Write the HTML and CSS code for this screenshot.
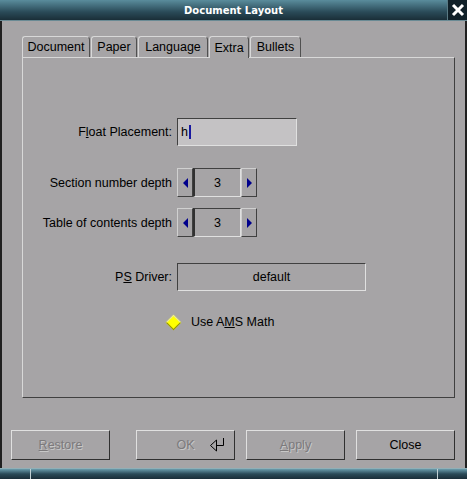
FILE: index.html
```html
<!DOCTYPE html>
<html lang="en">
<head>
    <meta charset="UTF-8">
    <title>Document Layout</title>
    <link rel="stylesheet" href="styles.css">
</head>
<body>
    <div class="window">
        <div class="titlebar">
            <span class="title">Document Layout</span>
            <span class="close-btn">
                <svg width="14" height="14" viewBox="0 0 14 14"><path d="M2 2 L12 12 M12 2 L2 12" stroke="#fff" stroke-width="3"/></svg>
            </span>
        </div>
        <div class="frame">
            <div class="tabs">
                <div class="tab w-doc">Document</div>
                <div class="tab w-paper">Paper</div>
                <div class="tab w-lang">Language</div>
                <div class="tab active w-extra">Extra</div>
                <div class="tab w-bullets">Bullets</div>
            </div>
            <div class="panel">
                <div class="row row-float">
                    <label class="lbl">F<u>l</u>oat Placement:</label>
                    <div class="input">h<span class="caret"></span></div>
                </div>
                <div class="row row-sec">
                    <label class="lbl">Section number depth</label>
                    <div class="spin">
                        <span class="arrow left"></span>
                        <span class="val">3</span>
                        <span class="arrow right"></span>
                    </div>
                </div>
                <div class="row row-toc">
                    <label class="lbl">Table of contents depth</label>
                    <div class="spin">
                        <span class="arrow left"></span>
                        <span class="val">3</span>
                        <span class="arrow right"></span>
                    </div>
                </div>
                <div class="row row-ps">
                    <label class="lbl">P<u>S</u> Driver:</label>
                    <div class="combo">default</div>
                </div>
                <div class="check">
                    <span class="diamond"></span>
                    <span>Use A<u>M</u>S Math</span>
                </div>
            </div>
            <div class="buttons">
                <div class="btn disabled"><u>R</u>estore</div>
                <div class="btn disabled ok">OK
                    <svg class="enter" width="18" height="16" viewBox="0 0 18 16"><path d="M15.5 1 V8.5 H8" fill="none" stroke="#000" stroke-width="1"/><path d="M8.5 3 L2.5 8.5 L8.5 14 Z" fill="none" stroke="#000" stroke-width="1"/></svg>
                </div>
                <div class="btn disabled"><u>A</u>pply</div>
                <div class="btn">Close</div>
            </div>
        </div>
        <div class="bottombar">
            <span class="grip g1"></span>
            <span class="grip g2"></span>
        </div>
    </div>
</body>
</html>
```

FILE: styles.css
```css
body {
    margin: 0;
    font-family: "Liberation Sans", Arial, sans-serif;
    font-size: 12.5px;
    color: #000;
    background: #a6a4a6;
}
.window {
    width: 467px;
    height: 479px;
    display: flex;
    flex-direction: column;
    background: #a6a4a6;
}
.titlebar {
    height: 20px;
    display: flex;
    align-items: center;
    justify-content: center;
    position: relative;
    background: linear-gradient(#5a8c9c, #2a4a58 60%, #1a2e38);
    border-bottom: 1px solid #6a8a94;
}
.title {
    color: #fff;
    font-family: "DejaVu Sans", sans-serif;
    font-weight: bold;
    font-size: 10px;
}
.close-btn {
    position: absolute;
    right: 0;
    top: 0;
    width: 19px;
    height: 20px;
    background: #102028;
    border-left: 1px solid #5a7a84;
    display: flex;
    align-items: center;
    justify-content: center;
}
.frame {
    flex: 1;
    border-left: 2px solid #202020;
    border-right: 2px solid #202020;
    padding: 15px 10px 0 20px;
    display: flex;
    flex-direction: column;
}
.tabs {
    display: flex;
    height: 21px;
    align-items: flex-end;
}
.tab {
    height: 21px;
    box-sizing: border-box;
    border-top: 1px solid #d8d8d8;
    border-left: 1px solid #d8d8d8;
    border-right: 1px solid #505050;
    border-radius: 3px 4px 0 0;
    display: flex;
    align-items: center;
    justify-content: center;
    margin-right: 1px;
}
.tab.active {
    height: 22px;
    margin-bottom: -1px;
    background: #a6a4a6;
    position: relative;
}
.w-doc { width: 68px; }
.w-paper { width: 46px; }
.w-lang { width: 70px; }
.w-extra { width: 40px; }
.w-bullets { width: 51px; }
.panel {
    width: 433px;
    height: 341px;
    box-sizing: border-box;
    border-top: 1px solid #d8d8d8;
    border-left: 1px solid #d8d8d8;
    border-right: 1px solid #404040;
    border-bottom: 1px solid #404040;
}
.row {
    display: flex;
    align-items: center;
}
.lbl {
    width: 149px;
    text-align: right;
    margin-right: 5px;
}
.row-float { margin-top: 60px; height: 28px; }
.row-sec { margin-top: 22px; height: 29px; }
.row-toc { margin-top: 11px; height: 29px; }
.row-ps { margin-top: 26px; height: 28px; }
.input {
    width: 120px;
    height: 28px;
    box-sizing: border-box;
    background: #c4c2c4;
    border-top: 1px solid #404040;
    border-left: 1px solid #404040;
    border-right: 1px solid #e0e0e0;
    border-bottom: 1px solid #e0e0e0;
    padding-left: 3px;
    display: flex;
    align-items: center;
}
.caret {
    display: inline-block;
    width: 2px;
    height: 14px;
    background: #1818a0;
    margin-left: 1px;
}
.spin {
    display: flex;
    height: 29px;
}
.arrow {
    width: 16px;
    box-sizing: border-box;
    border-top: 1px solid #d0d0d0;
    border-left: 1px solid #d0d0d0;
    border-right: 1px solid #404040;
    border-bottom: 1px solid #404040;
    display: flex;
    align-items: center;
    justify-content: center;
}
.arrow::after {
    content: "";
    width: 0;
    height: 0;
    border-top: 5px solid transparent;
    border-bottom: 5px solid transparent;
}
.arrow.left::after { border-right: 5px solid #00008c; }
.arrow.right::after { border-left: 5px solid #00008c; }
.val {
    width: 48px;
    box-sizing: border-box;
    border-top: 1px solid #404040;
    border-left: 2px solid #303030;
    border-right: 1px solid #e0e0e0;
    border-bottom: 1px solid #e0e0e0;
    display: flex;
    align-items: center;
    justify-content: center;
}
.combo {
    width: 189px;
    height: 28px;
    box-sizing: border-box;
    border-top: 1px solid #404040;
    border-left: 1px solid #404040;
    border-right: 1px solid #e0e0e0;
    border-bottom: 1px solid #e0e0e0;
    display: flex;
    align-items: center;
    justify-content: center;
}
.check {
    display: flex;
    align-items: center;
    margin-top: 24px;
    margin-left: 145px;
}
.diamond {
    width: 9px;
    height: 9px;
    background: #ffff00;
    border-top: 1px solid #e8e8a0;
    border-left: 1px solid #e8e8a0;
    border-right: 1px solid #909000;
    border-bottom: 1px solid #909000;
    transform: rotate(45deg);
    margin-right: 12px;
}
.buttons {
    display: flex;
    margin-top: 32px;
    margin-left: -11px;
}
.btn {
    width: 99px;
    height: 30px;
    box-sizing: border-box;
    border-top: 1px solid #e0e0e0;
    border-left: 1px solid #e0e0e0;
    border-right: 1px solid #303030;
    border-bottom: 1px solid #303030;
    display: flex;
    align-items: center;
    justify-content: center;
    position: relative;
}
.btn + .btn { margin-left: 11px; }
.btn.ok { margin-left: 26px; }
.btn.disabled {
    color: #7c7a7c;
    text-shadow: 1px 1px 0 #c8c8c8;
}
.enter {
    position: absolute;
    right: 8px;
    top: 6px;
}
.bottombar {
    height: 10px;
    background: linear-gradient(#6a9cac, #2a4a58 50%, #1a2e38);
    border-top: 1px solid #90b0b8;
    position: relative;
}
.grip {
    position: absolute;
    top: 0;
    width: 1px;
    height: 10px;
    background: #c0d0d4;
}
.g1 { left: 30px; }
.g2 { left: 437px; }
```
